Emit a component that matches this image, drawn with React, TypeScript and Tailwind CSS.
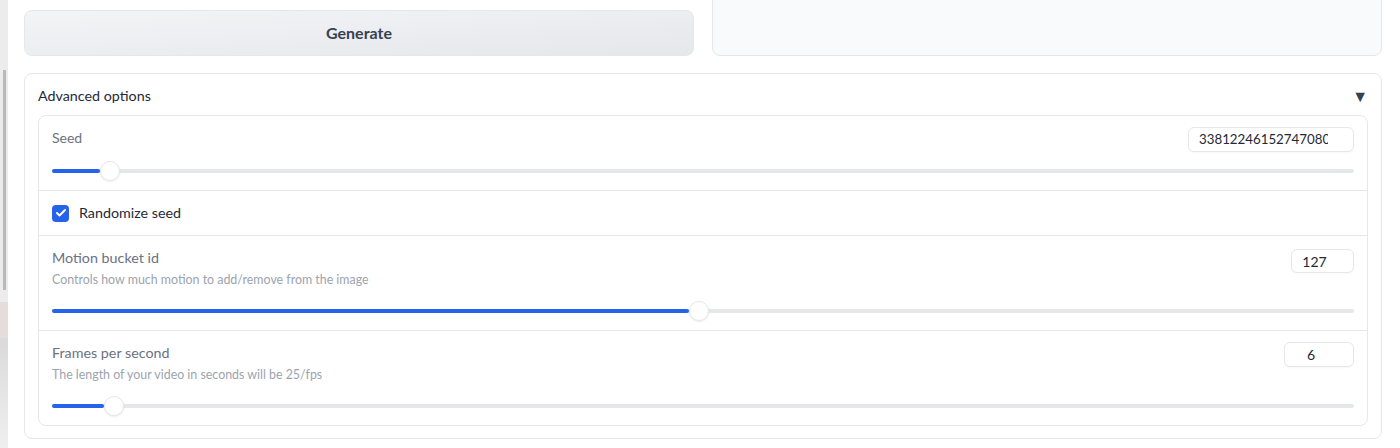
import { Check } from "lucide-react";

const font = { fontFamily: "Lato, 'Open Sans', sans-serif" };

function Slider({ pct }: { pct: number }) {
  // thumb is 20px wide, travels inside the track
  const left = `calc(${pct} * (100% - 20px))`;
  return (
    <div className="relative h-5 w-full">
      <div className="absolute left-0 right-0 top-[8px] h-[4px] rounded-full bg-[#e5e7eb]" />
      <div className="absolute left-0 top-[8px] h-[4px] rounded-full bg-[#2563eb]" style={{ width: left }} />
      <div
        className="absolute top-0 h-5 w-5 rounded-full border border-[#e5e7eb] bg-white shadow-[0_1px_2px_rgba(0,0,0,0.08)]"
        style={{ left }}
      />
    </div>
  );
}

function NumBox({ value, className }: { value: string; className: string }) {
  return (
    <div
      className={`flex items-center rounded-md border border-[#e5e7eb] bg-white text-[#1f2937] shadow-[0_1px_2px_rgba(0,0,0,0.03)] ${className}`}
    >
      <div className="overflow-hidden whitespace-nowrap">{value}</div>
    </div>
  );
}

export default function App() {
  return (
    <div className="flex h-[448px] w-[1400px] overflow-hidden bg-white" style={font}>
      {/* left window edge */}
      <div className="flex w-2 flex-col bg-[#ececec]">
        <div className="h-[70px]" />
        <div className="ml-[3px] h-[220px] w-[3px] bg-[#b9b9b9]" />
        <div className="h-[12px]" />
        <div className="h-[36px] bg-[#e6dcdb]" />
        <div className="flex-1 bg-gradient-to-b from-[#dadada] to-[#efefef]" />
      </div>

      <div className="flex-1 pl-4 pr-[18px]">
        {/* top row */}
        <div className="grid grid-cols-2 gap-[18px]">
          <button className="mt-[10px] flex h-[46px] items-center justify-center rounded-lg border border-[#e5e7eb] bg-gradient-to-br from-[#f3f4f6] to-[#e5e7eb] text-[16px] font-bold text-[#374151]">
            Generate
          </button>
          <div className="-mt-[10px] h-[66px] rounded-b-lg border border-[#e5e7eb] bg-[#f9fafb]" />
        </div>

        {/* advanced options */}
        <div className="mt-[17px] rounded-lg border border-[#e5e7eb] bg-white px-[13px] pb-[12px]">
          <div className="flex h-[41px] items-center justify-between pt-[2px]">
            <span className="text-[14.3px] text-[#1f2937]">Advanced options</span>
            <span className="text-[16px] leading-4 text-[#374151]">▼</span>
          </div>

          <div className="rounded-lg border border-[#e5e7eb]">
            {/* seed */}
            <div className="px-[13px] pt-3 pb-[9px]">
              <div className="flex h-6 items-start justify-between">
                <span className="text-[14px] leading-5 text-[#6b7280]">Seed</span>
                <NumBox value="3381224615274708000" className="-mt-px h-[25px] w-[166px] pl-[10px] pr-[25px] text-[13.3px]" />
              </div>
              <div className="mt-[9px]">
                <Slider pct={0.0375} />
              </div>
            </div>

            {/* randomize */}
            <div className="flex h-[45px] items-center gap-[10px] border-t border-[#e5e7eb] px-[13px]">
              <div className="flex h-[17px] w-[17px] items-center justify-center rounded-[4px] bg-[#2563eb]">
                <Check size={12} strokeWidth={4} className="text-white" />
              </div>
              <span className="text-[14.3px] text-[#1f2937]">Randomize seed</span>
            </div>

            {/* motion bucket */}
            <div className="border-t border-[#e5e7eb] px-[13px] pt-3 pb-[9px]">
              <div className="flex items-start justify-between">
                <div>
                  <div className="text-[14.3px] leading-5 text-[#6b7280]">Motion bucket id</div>
                  <div className="mt-1 text-[12.4px] leading-4 text-[#9ca3af]">
                    Controls how much motion to add/remove from the image
                  </div>
                </div>
                <NumBox value="127" className="mt-px h-6 w-[63px] justify-center pr-4 text-[14px]" />
              </div>
              <div className="mt-[13px]">
                <Slider pct={0.4965} />
              </div>
            </div>

            {/* fps */}
            <div className="border-t border-[#e5e7eb] px-[13px] pt-3 pb-[9px]">
              <div className="flex items-start justify-between">
                <div>
                  <div className="text-[14.3px] leading-5 text-[#6b7280]">Frames per second</div>
                  <div className="mt-1 text-[12.4px] leading-4 text-[#9ca3af]">
                    The length of your video in seconds will be 25/fps
                  </div>
                </div>
                <NumBox value="6" className="-mt-px h-[25px] w-[70px] justify-center pr-4 text-[14px]" />
              </div>
              <div className="mt-[13px]">
                <Slider pct={0.0406} />
              </div>
            </div>
          </div>
        </div>
      </div>
    </div>
  );
}
